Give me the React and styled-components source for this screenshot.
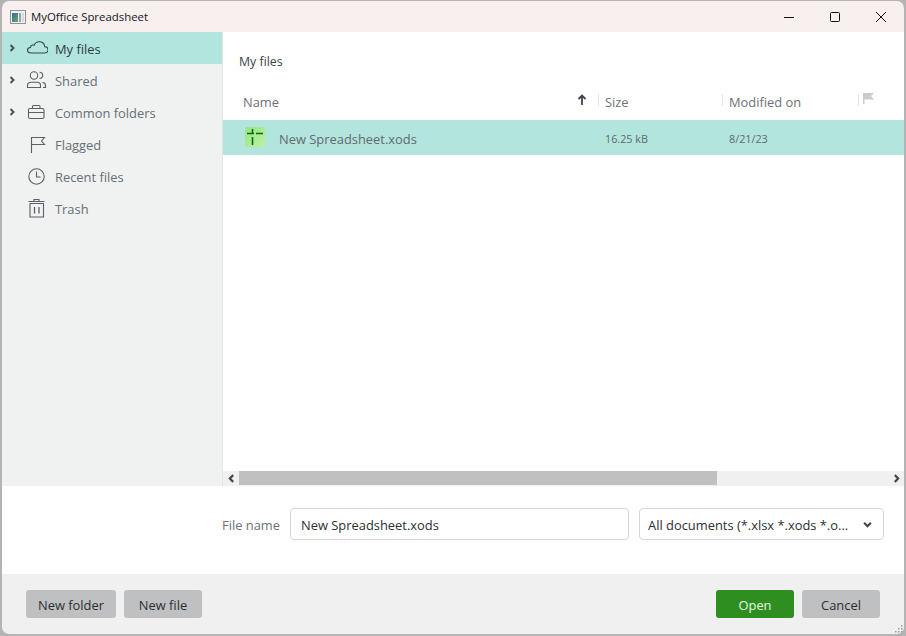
import React from "react";
import styled, { createGlobalStyle } from "styled-components";

const GlobalStyle = createGlobalStyle`
  html, body {
    margin: 0;
    padding: 0;
    width: 906px;
    height: 636px;
    overflow: hidden;
    background: #a9a9a9;
  }
  * {
    box-sizing: border-box;
  }
`;

const sideItems = [
  { name: "My files", icon: "cloud", arrow: true, active: true },
  { name: "Shared", icon: "people", arrow: true },
  { name: "Common folders", icon: "case", arrow: true },
  { name: "Flagged", icon: "flag" },
  { name: "Recent files", icon: "clock" },
  { name: "Trash", icon: "trash" },
];

const SideIcon = ({ type }) => {
  const stroke = type === "cloud" ? "#38434d" : "#5a6068";
  return (
    <svg width="24" height="24" viewBox="0 0 24 24" fill="none" stroke={stroke} strokeWidth="1.1">
      {type === "cloud" && (
        <path
          transform="translate(2 -1.5)"
          d="M5.5 18.5h13.2c2 0 3.3-1.4 3.3-3.2 0-1.8-1.4-3.1-3.2-3.1-.4-3-2.7-5-5.6-5-2.4 0-4.3 1.3-5.2 3.5-.6-.3-1.2-.3-1.8-.1-1 .3-1.6 1.1-1.7 2.1C3 13 1.5 14.2 1.5 15.8c0 1.5 1.7 2.7 4 2.7z"
        />
      )}
      {type === "people" && (
        <>
          <circle cx="10" cy="7.5" r="3.7" />
          <path d="M3.5 19.5v-2c0-2 1.5-3.2 3.5-3.2h6c2 0 3.5 1.2 3.5 3.200v2z" />
          <path d="M15.5 4.2c1.8 0 3.2 1.4 3.2 3.1s-1.4 3.2-3.2 3.2M18.5 14.5c1.8.2 3 1.3 3 3v2h-2.5" />
        </>
      )}
      {type === "case" && (
        <>
          <rect x="4.5" y="8.5" width="15.5" height="10" rx="1.5" />
          <path d="M4.5 12.5h15.5M8.5 8.500V6.500c0-.6.4-1 1-1h5.500c.6 0 1 .4 1 1v2" />
        </>
      )}
      {type === "flag" && <path d="M7.5 21V5.5h13l-3 3.5 3 3.5h-13" />}
      {type === "clock" && (
        <>
          <circle cx="12.5" cy="12.5" r="7.7" />
          <path d="M12.5 7.5v5.5h4" />
        </>
      )}
      {type === "trash" && (
        <>
          <path d="M6 7.5h13.5v13.5h-13.5zM4.5 5.5h16M10 5.5V3.5h5v2" />
          <path d="M10.5 11v6.5M15 11v6.5" strokeWidth="1.3" />
        </>
      )}
    </svg>
  );
};

const Chevron = ({ dir = "right", size = 8, color = "#4a5058" }) => (
  <svg width={size} height={size} viewBox="0 0 8 8" fill="none" stroke={color} strokeWidth="1.9">
    {dir === "right" && <path d="M2.5 1l3 3-3 3" />}
    {dir === "left" && <path d="M5.5 1l-3 3 3 3" />}
    {dir === "down" && <path d="M1 2.5l3 3 3-3" />}
  </svg>
);

export default function App() {
  return (
    <>
      <GlobalStyle />
      <Window>
        <TitleBar>
          <svg width="16" height="14" viewBox="0 0 16 14">
            <defs>
              <linearGradient id="appIcon" x1="0" y1="0" x2="1" y2="1">
                <stop offset="0" stopColor="#2b6f92" />
                <stop offset="1" stopColor="#6fa866" />
              </linearGradient>
            </defs>
            <rect x="0.5" y="0.5" width="15" height="13" fill="#f1f1f1" stroke="#8d9296" />
            <rect x="2" y="3" width="6" height="9" fill="url(#appIcon)" />
            <rect x="9" y="3" width="2" height="9" fill="#9aa0a6" />
            <rect x="12" y="3" width="2" height="9" fill="#d6d9dc" />
          </svg>
          <AppName>MyOffice Spreadsheet</AppName>
          <WindowButtons>
            <WindowButton>
              <svg width="12" height="12" viewBox="0 0 12 12" stroke="#111" fill="none">
                <path d="M1 6.5h10" />
              </svg>
            </WindowButton>
            <WindowButton>
              <svg width="12" height="12" viewBox="0 0 12 12" stroke="#111" fill="none">
                <rect x="1.5" y="1.5" width="9" height="9" rx="1" />
              </svg>
            </WindowButton>
            <WindowButton>
              <svg width="12" height="12" viewBox="0 0 12 12" stroke="#111" fill="none">
                <path d="M1 1l10 10M11 1L1 11" />
              </svg>
            </WindowButton>
          </WindowButtons>
        </TitleBar>

        <Body>
          <Sidebar>
            {sideItems.map((item) => (
              <SideRow key={item.name} $active={item.active}>
                <ArrowSlot>{item.arrow && <Chevron />}</ArrowSlot>
                <IconSlot>
                  <SideIcon type={item.icon} />
                </IconSlot>
                <SideLabel $active={item.active}>{item.name}</SideLabel>
              </SideRow>
            ))}
          </Sidebar>

          <Main>
            <PathLabel>My files</PathLabel>
            <HeaderRow>
              <NameHead>
                Name
                <svg width="10" height="12" viewBox="0 0 10 12" fill="none" stroke="#3e4652" strokeWidth="1.8">
                  <path d="M5 11V2M1.5 5L5 1.5 8.5 5" />
                </svg>
              </NameHead>
              <SizeHead>Size</SizeHead>
              <DateHead>Modified on</DateHead>
              <FlagHead>
                <svg width="11" height="11" viewBox="0 0 11 11">
                  <path d="M0 0h11L8 3 11 6.5H1.5V11H0z" fill="#c8ccd0" />
                </svg>
              </FlagHead>
            </HeaderRow>
            <FileRow>
              <NameCell>
                <svg width="20" height="20" viewBox="0 0 20 20">
                  <defs>
                    <linearGradient id="sheetIcon" x1="0" y1="0" x2="1" y2="1">
                      <stop offset="0" stopColor="#93e67f" />
                      <stop offset="1" stopColor="#bff0a8" />
                    </linearGradient>
                  </defs>
                  <rect width="20" height="20" rx="2" fill="url(#sheetIcon)" />
                  <path d="M7.5 2v5M2 6.5h7M7.5 10v8M11 6.5h7" stroke="#0b6b14" strokeWidth="1.6" fill="none" />
                </svg>
                <FileName>New Spreadsheet.xods</FileName>
              </NameCell>
              <SizeCell>16.25 kB</SizeCell>
              <DateCell>8/21/23</DateCell>
            </FileRow>
            <FileArea />
            <ScrollBar>
              <ScrollButton>
                <Chevron dir="left" size={9} color="#3f454b" />
              </ScrollButton>
              <ScrollTrack>
                <ScrollThumb />
              </ScrollTrack>
              <ScrollButton>
                <Chevron size={9} color="#3f454b" />
              </ScrollButton>
            </ScrollBar>
          </Main>
        </Body>

        <FormArea>
          <FieldLabel>File name</FieldLabel>
          <NameInput>New Spreadsheet.xods</NameInput>
          <TypeSelect>
            <span>All documents (*.xlsx *.xods *.o...</span>
            <Chevron dir="down" size={9} color="#3f454b" />
          </TypeSelect>
        </FormArea>

        <Footer>
          <ButtonGroup>
            <Button $w={90}>New folder</Button>
            <Button $w={78}>New file</Button>
          </ButtonGroup>
          <ButtonGroup>
            <Button $w={78} $primary>
              Open
            </Button>
            <Button $w={78}>Cancel</Button>
          </ButtonGroup>
          <Grip>
            <svg width="10" height="10" viewBox="0 0 10 10" fill="#9a9a9a">
              <rect x="7" y="1" width="1.5" height="1.5" />
              <rect x="4" y="4" width="1.5" height="1.5" />
              <rect x="7" y="4" width="1.5" height="1.5" />
              <rect x="1" y="7" width="1.5" height="1.5" />
              <rect x="4" y="7" width="1.5" height="1.5" />
              <rect x="7" y="7" width="1.5" height="1.5" />
            </svg>
          </Grip>
        </Footer>
      </Window>
    </>
  );
}

const Window = styled.div`
  width: 906px;
  height: 636px;
  padding: 1px 2px 2px 2px;
  display: flex;
  flex-direction: column;
  font-family: "Open Sans", "Noto Sans", sans-serif;
  font-size: 12.9px;
  background: #b4b4b4;
`;

const TitleBar = styled.div`
  height: 31px;
  flex: none;
  display: flex;
  align-items: center;
  padding-left: 8px;
  background: #f8efef;
  border-radius: 7px 7px 0 0;
`;

const AppName = styled.span`
  margin-left: 5px;
  font-size: 11.4px;
  color: #15181c;
`;

const WindowButtons = styled.div`
  margin-left: auto;
  display: flex;
`;

const WindowButton = styled.div`
  width: 46px;
  height: 30px;
  display: flex;
  align-items: center;
  justify-content: center;
`;

const Body = styled.div`
  flex: none;
  height: 454px;
  display: flex;
`;

const Sidebar = styled.div`
  width: 221px;
  flex: none;
  background: #f0f2f1;
  border-right: 1px solid #e4e6e6;
`;

const SideRow = styled.div`
  height: 32px;
  display: flex;
  align-items: center;
  background: ${(p) => (p.$active ? "#b2e5dd" : "transparent")};
`;

const ArrowSlot = styled.div`
  width: 20px;
  padding-left: 6px;
  display: flex;
  align-items: center;
`;

const IconSlot = styled.div`
  width: 33px;
  padding-left: 2px;
  display: flex;
  align-items: center;
`;

const SideLabel = styled.span`
  padding-top: 2px;
  color: ${(p) => (p.$active ? "#2d3a42" : "#686e74")};
`;

const Main = styled.div`
  flex: 1;
  min-width: 0;
  display: flex;
  flex-direction: column;
  background: #fff;
`;

const PathLabel = styled.div`
  height: 58px;
  padding: 21px 0 0 16px;
  font-size: 12.3px;
  line-height: 18px;
  color: #3a424a;
`;

const HeaderRow = styled.div`
  height: 30px;
  flex: none;
  display: grid;
  grid-template-columns: 375px 124px 136px 1fr;
  color: #6c7177;
`;

const HeadCell = styled.div`
  display: flex;
  align-items: center;
  height: 24px;
`;

const NameHead = styled(HeadCell)`
  padding: 0 11px 0 20px;
  justify-content: space-between;
  svg {
    margin-top: -5px;
  }
`;

const SizeHead = styled(HeadCell)`
  padding-left: 7px;
  position: relative;
  &::before {
    content: "";
    position: absolute;
    left: 0;
    top: 4px;
    height: 12px;
    border-left: 1px solid #e2e4e6;
  }
`;

const DateHead = styled(SizeHead)``;

const FlagHead = styled(SizeHead)`
  padding-left: 5px;
  svg {
    margin-top: -7px;
  }
`;

const FileRow = styled.div`
  height: 35px;
  flex: none;
  display: grid;
  grid-template-columns: 375px 124px 1fr;
  align-items: center;
  background: #b2e5dd;
`;

const NameCell = styled.div`
  display: flex;
  align-items: center;
  padding-left: 22px;
  svg {
    margin-top: -1px;
  }
`;

const FileName = styled.span`
  margin-left: 14px;
  padding-top: 2px;
  color: #62696f;
`;

const SizeCell = styled.div`
  padding: 2px 0 0 7px;
  font-size: 10.8px;
  color: #62696f;
`;

const DateCell = styled(SizeCell)``;

const FileArea = styled.div`
  flex: 1;
`;

const ScrollBar = styled.div`
  height: 15px;
  flex: none;
  display: flex;
  background: #f0f0f0;
`;

const ScrollButton = styled.div`
  width: 16px;
  flex: none;
  display: flex;
  align-items: center;
  justify-content: center;
`;

const ScrollTrack = styled.div`
  flex: 1;
  padding-bottom: 1px;
`;

const ScrollThumb = styled.div`
  width: 478px;
  height: 14px;
  background: #bfc0c2;
`;

const FormArea = styled.div`
  height: 88px;
  flex: none;
  display: flex;
  align-items: center;
  padding: 0 20px 12px 220px;
  background: #fff;
`;

const FieldLabel = styled.span`
  width: 68px;
  flex: none;
  padding-top: 2px;
  color: #6c7177;
`;

const FieldBox = styled.div`
  height: 32px;
  display: flex;
  align-items: center;
  background: #fff;
  border: 1px solid #d4d6d8;
  border-radius: 4px;
  color: #2b2f33;
`;

const NameInput = styled(FieldBox)`
  width: 339px;
  padding: 2px 0 0 10px;
`;

const TypeSelect = styled(FieldBox)`
  width: 245px;
  margin-left: 10px;
  padding: 0 11px 0 8px;
  justify-content: space-between;
  span {
    padding-top: 2px;
    white-space: nowrap;
  }
`;

const Footer = styled.div`
  position: relative;
  height: 60px;
  flex: none;
  display: flex;
  align-items: flex-start;
  justify-content: space-between;
  padding: 16px 24px 0 24px;
  background: #f0f0f0;
  border-radius: 0 0 7px 7px;
`;

const ButtonGroup = styled.div`
  display: flex;
  gap: 8px;
`;

const Button = styled.div`
  width: ${(p) => p.$w}px;
  height: 28px;
  padding-top: 1px;
  display: flex;
  align-items: center;
  justify-content: center;
  border-radius: 3px;
  background: ${(p) => (p.$primary ? "#2e8f20" : "#bfc0c2")};
  color: ${(p) => (p.$primary ? "#e8f5e4" : "#2b2f33")};
`;

const Grip = styled.div`
  position: absolute;
  right: 0;
  bottom: 0;
  width: 10px;
  height: 10px;
  display: flex;
`;
